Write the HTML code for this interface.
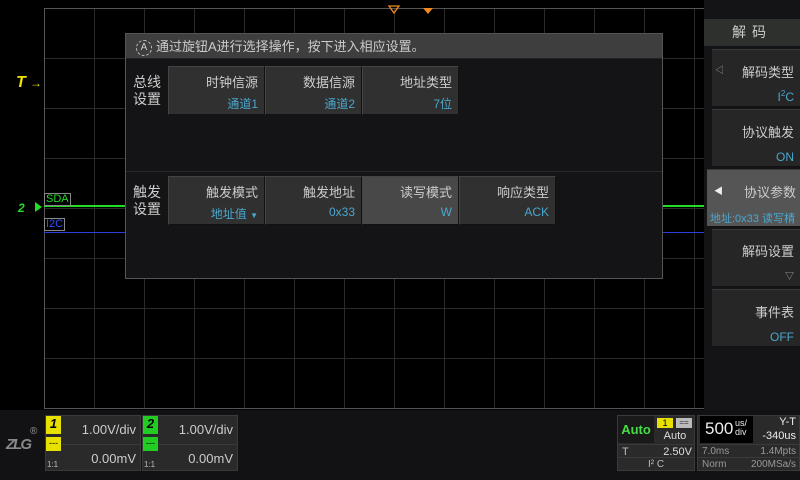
<!DOCTYPE html>
<html><head><meta charset="utf-8"><style>
*{margin:0;padding:0;box-sizing:border-box}
body{width:800px;height:480px;background:#000;position:relative;overflow:hidden;font-family:"Liberation Sans","Noto Sans CJK SC",sans-serif;color:#ccc}
.a{position:absolute}
.grid{left:44px;top:8px;width:661px;height:401px;border:1px solid #555;border-right:none;
background-image:linear-gradient(to right,#2a2a2a 1px,transparent 1px),linear-gradient(to bottom,#2a2a2a 1px,transparent 1px);background-size:50px 50px;background-position:-1px -1px}
.btn{background:#2f302f;border:1px solid #444;border-right-color:#111;border-bottom-color:#111;text-align:right;padding-right:6px}
.btn .t{font-size:13px;color:#ccc;margin-top:5px}
.btn .v{font-size:12px;color:#4aa7cf;margin-top:4px}
.sb{background:#262626;border-top:1px solid #3a3a3a;border-bottom:1px solid #111;text-align:right;padding-right:6px}
.sb .t{font-size:13px;color:#ccc;margin-top:15px}
.sb .v{font-size:12px;color:#4aa7cf;margin-top:9px}
.cb{background:#2a2a2a;border:1px solid #3a3a3a}
</style></head><body>
<div class="a grid"></div>
<!-- markers -->
<svg class="a" style="left:388px;top:5px" width="12" height="10"><path d="M1 1 L11 1 L6 8 Z" fill="none" stroke="#f08a1e" stroke-width="1.3"/></svg>
<div class="a" style="left:423px;top:8px;width:0;height:0;border-left:5px solid transparent;border-right:5px solid transparent;border-top:6px solid #f08a1e"></div>
<div class="a" style="left:16px;top:74px;color:#f0e000;font-size:16px;font-weight:bold;font-style:italic">T</div>
<div class="a" style="left:30px;top:76px;color:#f0e000;font-size:12px">→</div>
<!-- traces -->
<div class="a" style="left:44px;top:205px;width:660px;height:2px;background:#22dd22"></div>
<div class="a" style="left:44px;top:232px;width:660px;height:1px;background:#2a3ee0"></div>
<div class="a" style="left:44px;top:193px;border:1px solid #888;color:#22dd22;font-size:11px;line-height:11px;padding:0 1px">SDA</div>
<div class="a" style="left:44px;top:218px;border:1px solid #888;color:#3050ff;font-size:11px;line-height:11px;padding:0 1px">I2C</div>
<div class="a" style="left:18px;top:201px;color:#22dd22;font-size:12px;font-weight:bold;font-style:italic">2</div>
<div class="a" style="left:35px;top:202px;width:0;height:0;border-top:5px solid transparent;border-bottom:5px solid transparent;border-left:7px solid #22dd22"></div>
<!-- dialog -->
<div class="a" style="left:125px;top:33px;width:538px;height:246px;background:#141416;border:1px solid #555">
 <div style="height:25px;background:#3e3e3e;border-bottom:1px solid #222;font-size:13px;color:#ccc;line-height:25px;padding-left:10px"><span style="display:inline-block;width:16px;height:16px;border:1px dashed #bbb;border-radius:50%;font-size:10px;line-height:14px;text-align:center;vertical-align:middle;margin-right:4px">A</span>通过旋钮A进行选择操作，按下进入相应设置。</div>
 <div class="a" style="left:0;top:137px;width:536px;height:1px;background:#2a2a2a"></div>
 <div class="a" style="left:7px;top:40px;font-size:14px;line-height:17px;color:#ccc">总线<br>设置</div>
 <div class="a" style="left:7px;top:150px;font-size:14px;line-height:17px;color:#ccc">触发<br>设置</div>
</div>
<div class="a btn" style="left:168px;top:66px;width:97px;height:49px"><div class="t">时钟信源</div><div class="v">通道1</div></div>
<div class="a btn" style="left:265px;top:66px;width:97px;height:49px"><div class="t">数据信源</div><div class="v">通道2</div></div>
<div class="a btn" style="left:362px;top:66px;width:97px;height:49px"><div class="t">地址类型</div><div class="v">7位</div></div>
<div class="a btn" style="left:168px;top:176px;width:97px;height:49px"><div class="t">触发模式</div><div class="v">地址值 <span style="font-size:8px">▼</span></div></div>
<div class="a btn" style="left:265px;top:176px;width:97px;height:49px"><div class="t">触发地址</div><div class="v">0x33</div></div>
<div class="a btn" style="left:362px;top:176px;width:97px;height:49px;background:#484848"><div class="t">读写模式</div><div class="v">W</div></div>
<div class="a btn" style="left:459px;top:176px;width:97px;height:49px"><div class="t">响应类型</div><div class="v">ACK</div></div>
<!-- side menu -->
<div class="a" style="left:704px;top:0;width:96px;height:410px;background:#141416"></div>
<div class="a" style="left:704px;top:19px;width:96px;height:27px;background:#2e302e;text-align:center;font-size:14px;line-height:27px;color:#ccc;letter-spacing:6px">解码</div>
<div class="a sb" style="left:712px;top:49px;width:88px;height:58px"><div class="t" style="margin-top:12px">解码类型</div><div class="v" style="margin-top:8px">I<sup style="font-size:8px">2</sup>C</div><span class="a" style="left:3px;top:13px;font-size:9px;color:#999">◁</span></div>
<div class="a sb" style="left:712px;top:109px;width:88px;height:58px"><div class="t" style="margin-top:12px">协议触发</div><div class="v">ON</div></div>
<div class="a sb" style="left:707px;top:169px;width:93px;height:58px;background:#555;padding-right:4px"><div class="t" style="margin-top:12px">协议参数</div><div class="v" style="font-size:11px;white-space:nowrap;text-align:left;padding-left:3px">地址:0x33 读写棈</div><span class="a" style="left:7px;top:14px;font-size:9px;color:#eee">◀</span></div>
<div class="a sb" style="left:712px;top:229px;width:88px;height:58px"><div class="t" style="margin-top:11px">解码设置</div><div class="v" style="color:#aaa;font-size:9px">▽</div></div>
<div class="a sb" style="left:712px;top:289px;width:88px;height:58px"><div class="t" style="margin-top:12px">事件表</div><div class="v">OFF</div></div>
<!-- bottom -->
<div class="a" style="left:0;top:410px;width:800px;height:70px;background:#121214"></div>
<div class="a" style="left:6px;top:436px;font-size:15px;font-weight:bold;font-style:italic;color:#888;letter-spacing:-2px">ZLG</div>
<div class="a" style="left:30px;top:426px;font-size:10px;color:#999">®</div>
<div class="a cb" style="left:45px;top:415px;width:96px;height:56px"></div>
<div class="a" style="left:46px;top:416px;width:15px;height:18px;background:#e8e000;color:#000;font-weight:bold;font-style:italic;font-size:13px;text-align:center">1</div>
<div class="a" style="left:46px;top:437px;width:15px;height:14px;background:#e8e000;color:#000;font-size:9px;text-align:center;line-height:12px">---</div>
<div class="a" style="left:47px;top:460px;font-size:8px;color:#bbb">1:1</div>
<div class="a" style="left:62px;top:422px;width:78px;text-align:right;font-size:13px;color:#ccc;padding-right:4px">1.00V/div</div>
<div class="a" style="left:62px;top:444px;width:78px;height:1px;background:#3a3a3a"></div>
<div class="a" style="left:62px;top:451px;width:78px;text-align:right;font-size:13px;color:#ccc;padding-right:4px">0.00mV</div>
<div class="a cb" style="left:142px;top:415px;width:96px;height:56px"></div>
<div class="a" style="left:143px;top:416px;width:15px;height:18px;background:#22cc22;color:#000;font-weight:bold;font-style:italic;font-size:13px;text-align:center">2</div>
<div class="a" style="left:143px;top:437px;width:15px;height:14px;background:#22cc22;color:#000;font-size:9px;text-align:center;line-height:12px">---</div>
<div class="a" style="left:144px;top:460px;font-size:8px;color:#bbb">1:1</div>
<div class="a" style="left:159px;top:422px;width:78px;text-align:right;font-size:13px;color:#ccc;padding-right:4px">1.00V/div</div>
<div class="a" style="left:159px;top:444px;width:78px;height:1px;background:#3a3a3a"></div>
<div class="a" style="left:159px;top:451px;width:78px;text-align:right;font-size:13px;color:#ccc;padding-right:4px">0.00mV</div>
<!-- trigger box -->
<div class="a cb" style="left:617px;top:415px;width:78px;height:56px"></div>
<div class="a" style="left:618px;top:416px;width:36px;height:27px;background:#1a1a1a;color:#44dd44;font-weight:bold;font-size:13px;line-height:27px;text-align:center">Auto</div>
<div class="a" style="left:657px;top:418px;width:16px;height:10px;background:#e8e000;color:#000;font-size:9px;line-height:10px;text-align:center">1</div>
<div class="a" style="left:676px;top:418px;width:16px;height:10px;background:#bbb;color:#333;font-size:8px;line-height:9px;text-align:center">==</div>
<div class="a" style="left:656px;top:430px;width:38px;text-align:center;font-size:11px;color:#ddd">Auto</div>
<div class="a" style="left:618px;top:444px;width:76px;height:1px;background:#3a3a3a"></div>
<div class="a" style="left:622px;top:446px;font-size:11px;color:#bbb">T</div>
<div class="a" style="left:660px;top:446px;width:32px;text-align:right;font-size:11px;color:#ddd">2.50V</div>
<div class="a" style="left:618px;top:457px;width:76px;height:1px;background:#3a3a3a"></div>
<div class="a" style="left:618px;top:459px;width:76px;text-align:center;font-size:10px;color:#bbb">I² C</div>
<!-- timebase -->
<div class="a cb" style="left:697px;top:415px;width:103px;height:56px"></div>
<div class="a" style="left:700px;top:416px;width:53px;height:27px;background:#000;color:#eee"><span class="a" style="left:5px;top:3px;font-size:17px">500</span><span class="a" style="left:35px;top:3px;font-size:9px;line-height:9px">us/<br>div</span></div>
<div class="a" style="left:756px;top:416px;width:40px;text-align:right;font-size:11px;color:#eee">Y-T</div>
<div class="a" style="left:752px;top:430px;width:44px;text-align:right;font-size:11px;color:#eee">-340us</div>
<div class="a" style="left:698px;top:444px;width:101px;height:1px;background:#3a3a3a"></div>
<div class="a" style="left:702px;top:446px;font-size:10px;color:#999">7.0ms</div>
<div class="a" style="left:740px;top:446px;width:56px;text-align:right;font-size:10px;color:#999">1.4Mpts</div>
<div class="a" style="left:698px;top:457px;width:101px;height:1px;background:#3a3a3a"></div>
<div class="a" style="left:702px;top:459px;font-size:10px;color:#999">Norm</div>
<div class="a" style="left:740px;top:459px;width:56px;text-align:right;font-size:10px;color:#999">200MSa/s</div>
</body></html>
